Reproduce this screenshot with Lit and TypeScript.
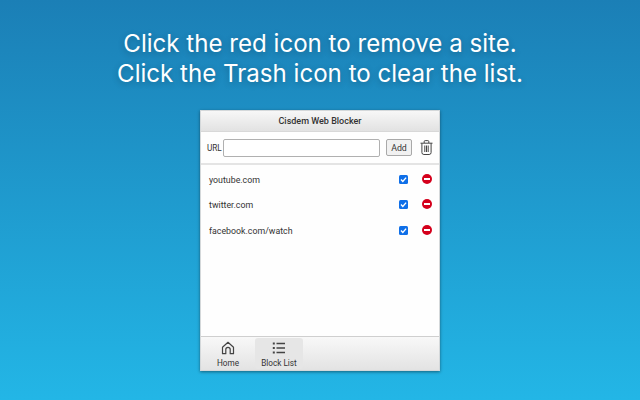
import { LitElement, html, css } from "lit";
import { customElement } from "lit/decorators.js";

const sites = ["youtube.com", "twitter.com", "facebook.com/watch"];

@customElement("app-root")
export class AppRoot extends LitElement {
  static styles = css`
    :host {
      display: flex;
      flex-direction: column;
      align-items: center;
      width: 640px;
      height: 400px;
      overflow: hidden;
      box-sizing: border-box;
      padding-top: 29px;
      background: linear-gradient(180deg, #1b7fb6 0%, #23b6e6 100%);
      font-family: Roboto, sans-serif;
    }
    .headline {
      font-family: Inter, sans-serif;
      font-size: 24.1px;
      line-height: 30px;
      height: 81px;
      color: #fff;
      text-align: center;
      text-shadow: 0 2px 6px rgba(0, 0, 0, 0.25);
      white-space: nowrap;
    }
    .win {
      width: 240px;
      height: 261px;
      display: flex;
      flex-direction: column;
      background: #fefefe;
      box-shadow: 0 1px 3px rgba(0, 0, 0, 0.45);
      box-sizing: border-box;
      border: 1px solid #d4d8da;
      color: #333;
      font-size: 8.8px;
    }
    .title {
      height: 20px;
      flex: none;
      display: flex;
      align-items: center;
      justify-content: center;
      background: linear-gradient(180deg, #f7f7f7, #e2e2e2);
      font-size: 9px;
      font-weight: 500;
      border-bottom: 1px solid #d8d8d8;
    }
    .tools {
      height: 33px;
      flex: none;
      display: flex;
      align-items: center;
      box-sizing: border-box;
      padding: 0 6px;
      border-bottom: 2px solid #e4e4e4;
    }
    .url {
      width: 16px;
      font-size: 8.2px;
    }
    .input {
      width: 157px;
      height: 18px;
      box-sizing: border-box;
      background: #fff;
      border: 1px solid #b0b0b0;
      border-radius: 2px;
    }
    .add {
      width: 26px;
      height: 17px;
      box-sizing: border-box;
      margin-left: 6px;
      display: flex;
      align-items: center;
      justify-content: center;
      background: #f1f1f1;
      border: 1px solid #a9a9a9;
      border-radius: 2px;
    }
    .trash {
      margin-left: 8px;
      width: 13px;
      height: 15px;
      display: block;
    }
    .list {
      flex: 1;
      padding-top: 2px;
    }
    .row {
      height: 25.5px;
      display: flex;
      align-items: center;
      padding: 0 6px 0 8px;
    }
    .site {
      flex: 1;
    }
    .check {
      width: 9px;
      height: 9px;
      border-radius: 1.5px;
      background: #0f6fe8;
      margin: -1px 14px 0 0;
      display: block;
      flex: none;
    }
    .minus {
      width: 10px;
      height: 10px;
      display: block;
      flex: none;
      margin: -2px 1px 0 0;
    }
    .tabs {
      height: 34px;
      flex: none;
      display: flex;
      box-sizing: border-box;
      padding: 1px 0 1px 6px;
      gap: 6px;
      background: linear-gradient(180deg, #f8f8f8, #e3e3e3);
      border-top: 1px solid #cfcfcf;
    }
    .tab {
      width: 42px;
      display: flex;
      flex-direction: column;
      align-items: center;
      border-radius: 3px;
      font-size: 8.2px;
      line-height: 11px;
    }
    .tab.wide {
      width: 48px;
    }
    .tab.on {
      background: #e6e6e6;
    }
    .tab svg {
      display: block;
      width: 14px;
      height: 14px;
      margin: 3px 0 3px;
    }
  `;

  render() {
    return html`
      <div class="headline">Click the red icon to remove a site.<br />Click the Trash icon to clear the list.</div>
      <div class="win">
        <div class="title">Cisdem Web Blocker</div>
        <div class="tools">
          <span class="url">URL</span>
          <div class="input"></div>
          <div class="add">Add</div>
          <svg class="trash" viewBox="0 0 13 15" fill="none" stroke="#444" stroke-width="1">
            <path d="M.5 3.2h12M4.2 3V1.6a1 1 0 0 1 1-1h2.6a1 1 0 0 1 1 1V3" />
            <path d="M1.9 3.2v9.3a2 2 0 0 0 2 2h5.2a2 2 0 0 0 2-2V3.2M4.8 5.5v6.5M6.5 5.5v6.5M8.2 5.5v6.5" />
          </svg>
        </div>
        <div class="list">
          ${sites.map(
            (s) => html`
              <div class="row">
                <span class="site">${s}</span>
                <svg class="check" viewBox="0 0 9 9" fill="none">
                  <path d="M2 4.6l1.8 1.8L7.1 2.6" stroke="#fff" stroke-width="1.4" />
                </svg>
                <svg class="minus" viewBox="0 0 10 10">
                  <circle cx="5" cy="5" r="5" fill="#d4001c" />
                  <rect x="2" y="4" width="6" height="2" fill="#fff" />
                </svg>
              </div>
            `
          )}
        </div>
        <div class="tabs">
          <div class="tab">
            <svg viewBox="0 0 14 14" fill="none" stroke="#444" stroke-width="1.2">
              <path d="M1.5 6.2L7 1.3l5.5 4.9v6.5H9.2V8.5a2.2 2.2 0 0 0-4.4 0v4.2H1.5z" stroke-linejoin="round" />
            </svg>
            Home
          </div>
          <div class="tab wide on">
            <svg viewBox="0 0 14 14" fill="none" stroke="#444" stroke-width="1.3">
              <path d="M4.5 2.5H13M4.5 7H13M4.5 11.5H13" />
              <path d="M.8 2.5h2M.8 7h2M.8 11.5h2" stroke-width="2.2" />
            </svg>
            Block List
          </div>
        </div>
      </div>
    `;
  }
}
